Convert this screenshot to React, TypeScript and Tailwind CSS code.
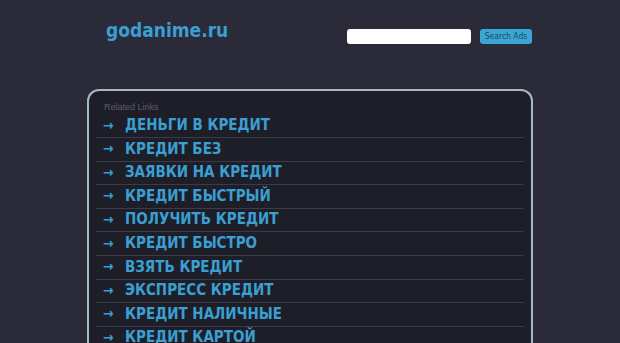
import React from "react";

const links = [
  "ДЕНЬГИ В КРЕДИТ",
  "КРЕДИТ БЕЗ",
  "ЗАЯВКИ НА КРЕДИТ",
  "КРЕДИТ БЫСТРЫЙ",
  "ПОЛУЧИТЬ КРЕДИТ",
  "КРЕДИТ БЫСТРО",
  "ВЗЯТЬ КРЕДИТ",
  "ЭКСПРЕСС КРЕДИТ",
  "КРЕДИТ НАЛИЧНЫЕ",
  "КРЕДИТ КАРТОЙ",
];

export default function App() {
  return (
    <div className="h-screen bg-[#2a2a39] font-['DejaVu_Sans_Condensed','DejaVu_Sans',sans-serif] overflow-hidden">
      <div className="w-[446px] mx-auto">
        {/* Header */}
        <header className="flex justify-between h-[89px]">
          <h1 className="pl-[19px] pt-[16px] text-[19px] leading-[28px] font-bold text-[#3a9fd1]">
            godanime.ru
          </h1>
          <div className="flex items-start gap-[9px] pt-[29px] mr-[1px]">
            <input
              type="text"
              className="w-[124px] h-[15px] bg-white rounded-[3px] outline-none"
            />
            <button className="w-[52px] h-[15px] rounded-[3px] bg-[#3aa6d6] text-[#1d4a64] text-[8.5px] leading-[15px]">
              Search Ads
            </button>
          </div>
        </header>

        {/* Related links box */}
        <div className="rounded-t-[12px] border-2 border-b-0 border-[#a6b7c7] bg-[#1e1e29] px-[7px] pt-[10px] h-[254px]">
          <p className="pl-[8px] text-[9px] leading-[13.4px] text-[#5c5c6b] font-['Liberation_Sans',sans-serif]">
            Related Links
          </p>
          {links.map((link) => (
            <a
              key={link}
              href="#"
              className="flex items-center h-[23.6px] border-b border-[#3a3a48] pb-[1px] text-[#3a9fd1] font-bold text-[15px]"
            >
              <span className="w-[22px] pl-[7px] box-content text-[14px]">→</span>
              <span>{link}</span>
            </a>
          ))}
        </div>
      </div>
    </div>
  );
}
